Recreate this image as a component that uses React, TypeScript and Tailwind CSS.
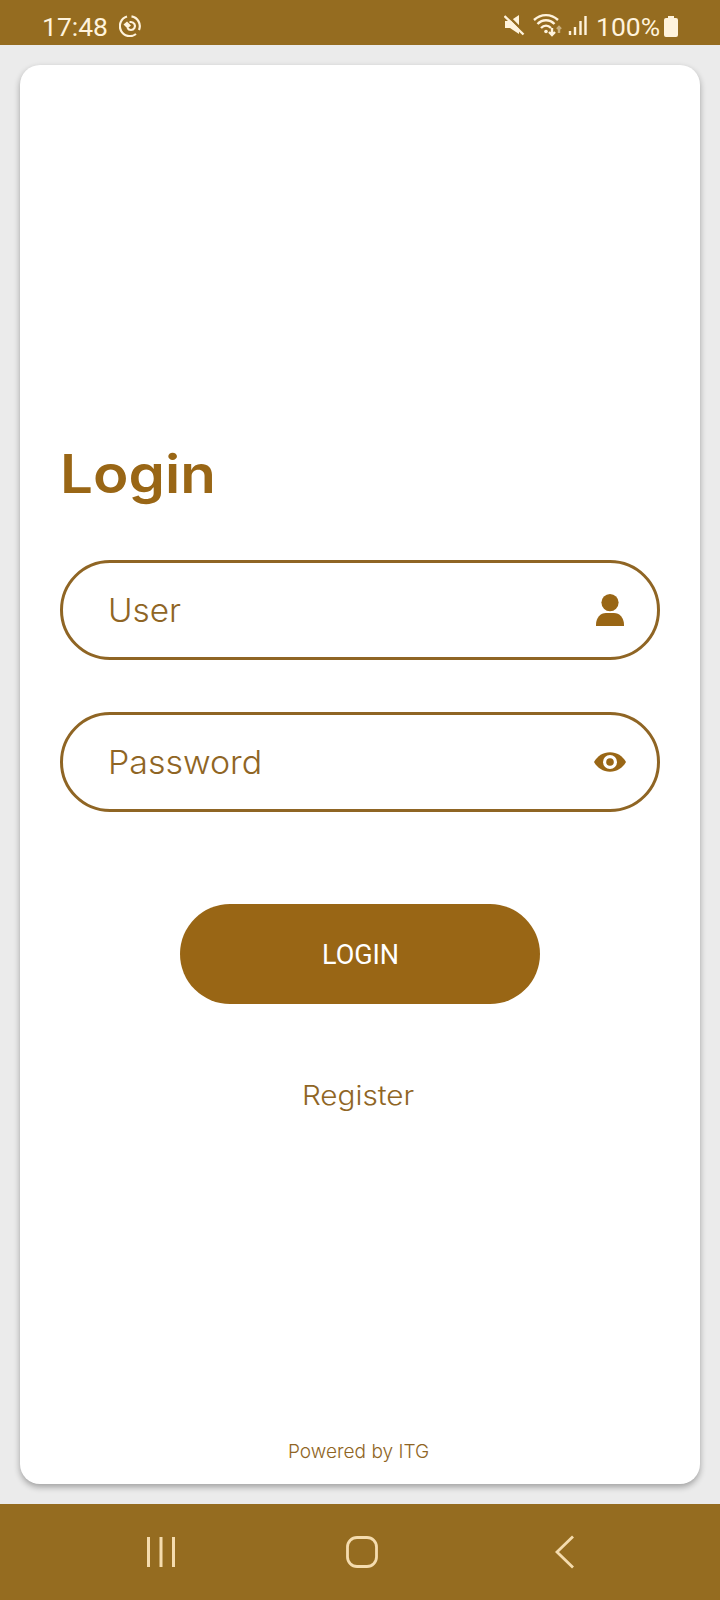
import type { ReactNode } from "react"

interface FieldProps {
  label: string
  labelClass: string
  icon: ReactNode
}

const UserIcon = () => (
  <svg width="32" height="34" viewBox="0 0 32 34" fill="currentColor">
    <circle cx="16" cy="9.6" r="8.6" />
    <path d="M2 33v-1C2 24.500 6.500 20 12 20h8c5.500 0 10 4.500 10 12v1Z" />
  </svg>
)

const EyeIcon = () => (
  <svg width="32" height="20" viewBox="0 0 32 20" fill="currentColor">
    <path d="M0 10C3.500 4 9 .3 16 .3S28.500 4 32 10C28.500 16 23 19.700 16 19.700S3.500 16 0 10Z" />
    <circle cx="16" cy="10" r="7" fill="white" />
    <circle cx="16" cy="10" r="3.800" />
  </svg>
)

const Field = ({ label, labelClass, icon }: FieldProps) => (
  <label className="flex h-[100px] items-center justify-between rounded-full border-3 border-[#8f6524] pr-[31px] pl-[45px]">
    <span className={`origin-left pt-px text-[32px] leading-none font-light ${labelClass}`}>{label}</span>
    <span className="flex w-8 justify-center text-[#996615]">{icon}</span>
  </label>
)

const StatusBar = () => (
  <header className="flex h-[45px] shrink-0 items-start justify-between bg-[#956c20] pl-[42px] pr-[42px] pt-[11px] font-[Roboto] text-[26.500px] leading-8 text-[#fff3dc]">
    <div className="flex items-center gap-3">
      <span className="w-[65px] whitespace-nowrap">17:48</span>
      <svg className="-mt-0.5" width="22" height="22" viewBox="0 0 22 22" fill="none" stroke="currentColor" strokeWidth="2.200">
        <path d="M8 1.500A10 10 0 1 0 17 19M20 15A10 10 0 0 0 12.500 1.300" />
        <path d="M10.500 7h1.500a4 4 0 1 1-3.500 6" />
        <path d="m4.500 9.500 3.500-3 4 4-3.500 3Z" fill="currentColor" stroke="none" />
      </svg>
    </div>
    <div className="flex items-center">
      <svg className="-mt-0.5" width="92" height="30" viewBox="504 12 92 30" fill="none" stroke="currentColor" strokeWidth="2.400">
        <path d="M505 22h5l9-6v19l-9-6h-5Z" fill="currentColor" stroke="none" />
        <path d="m506 15 19 19" stroke="#956c20" strokeWidth="2.500" />
        <path d="m504.500 17 19 18.500" />
        <path d="M534 21c7-6.500 17-6.500 24 0M537.500 25c5-5 12-5 17 0M541 29c3-3 7-3 10 0" />
        <circle cx="546" cy="32.500" r="1.800" fill="currentColor" stroke="none" />
        <path d="M552 29v7m-3-3 3 3 3-3" />
        <path d="M559 34v-6m-2 2 2-2 2 2" opacity="0.5" />
        <path d="M570 32v4M575 28v8M580.500 22v14M585.500 17v19" />
      </svg>
      <span className="w-[68px] whitespace-nowrap">100%</span>
      <svg className="-mt-0.5" width="14" height="21" viewBox="0 0 14 21" fill="currentColor">
        <path d="M4 0h6v2h2a2 2 0 0 1 2 2v15a2 2 0 0 1-2 2H2a2 2 0 0 1-2-2V4a2 2 0 0 1 2-2h2Z" />
      </svg>
    </div>
  </header>
)

const NavigationBar = () => (
  <nav className="flex h-24 shrink-0 items-center bg-[#956c20] pl-[146px] text-[#f5dcae]">
    <svg width="30" height="32" viewBox="0 0 30 32" stroke="currentColor" strokeWidth="3">
      <path d="M2.500 1v30M15 1v30M27.500 1v30" />
    </svg>
    <svg className="ml-[170px]" width="32" height="32" viewBox="0 0 32 32" fill="none" stroke="currentColor" strokeWidth="2.8">
      <rect x="1.500" y="1.500" width="29" height="29" rx="9.500" />
    </svg>
    <svg className="ml-[177px]" width="20" height="34" viewBox="0 0 20 34" fill="none" stroke="currentColor" strokeWidth="2.8">
      <path d="M18 1.500 2 17l16 15.500" />
    </svg>
  </nav>
)

const App = () => {
  return (
    <div className="flex h-[1600px] w-[720px] flex-col bg-[#ebebeb] font-[Inter,sans-serif] text-[#8f6524]">
      <StatusBar />
      <main className="flex-1 p-5">
        <section className="flex h-full flex-col rounded-[20px] bg-white px-10 shadow-[0_3px_6px_rgba(0,0,0,0.32)]">
          <h1 className="mt-[377px] origin-left scale-x-[1.1] text-[53px] leading-[64px] font-semibold text-[#996615]">
            Login
          </h1>
          <div className="mt-[54px] flex flex-col gap-[52px]">
            <Field label="User" labelClass="scale-x-[1.04]" icon={<UserIcon />} />
            <Field label="Password" labelClass="scale-x-[1.06]" icon={<EyeIcon />} />
          </div>
          <button className="mt-[92px] h-[100px] w-[360px] self-center rounded-full bg-[#996615] pt-[3px] pl-px font-[Roboto] text-[27px] tracking-[-0.1px] text-white">
            LOGIN
          </button>
          <a className="mt-[74px] -ml-1 scale-x-[1.1] self-center text-[27px] leading-9 font-light">Register</a>
          <p className="mt-auto mb-[21px] -ml-[3px] scale-x-[1.03] self-center text-[18.500px] leading-6 font-light">Powered by ITG</p>
        </section>
      </main>
      <NavigationBar />
    </div>
  )
}

export default App
